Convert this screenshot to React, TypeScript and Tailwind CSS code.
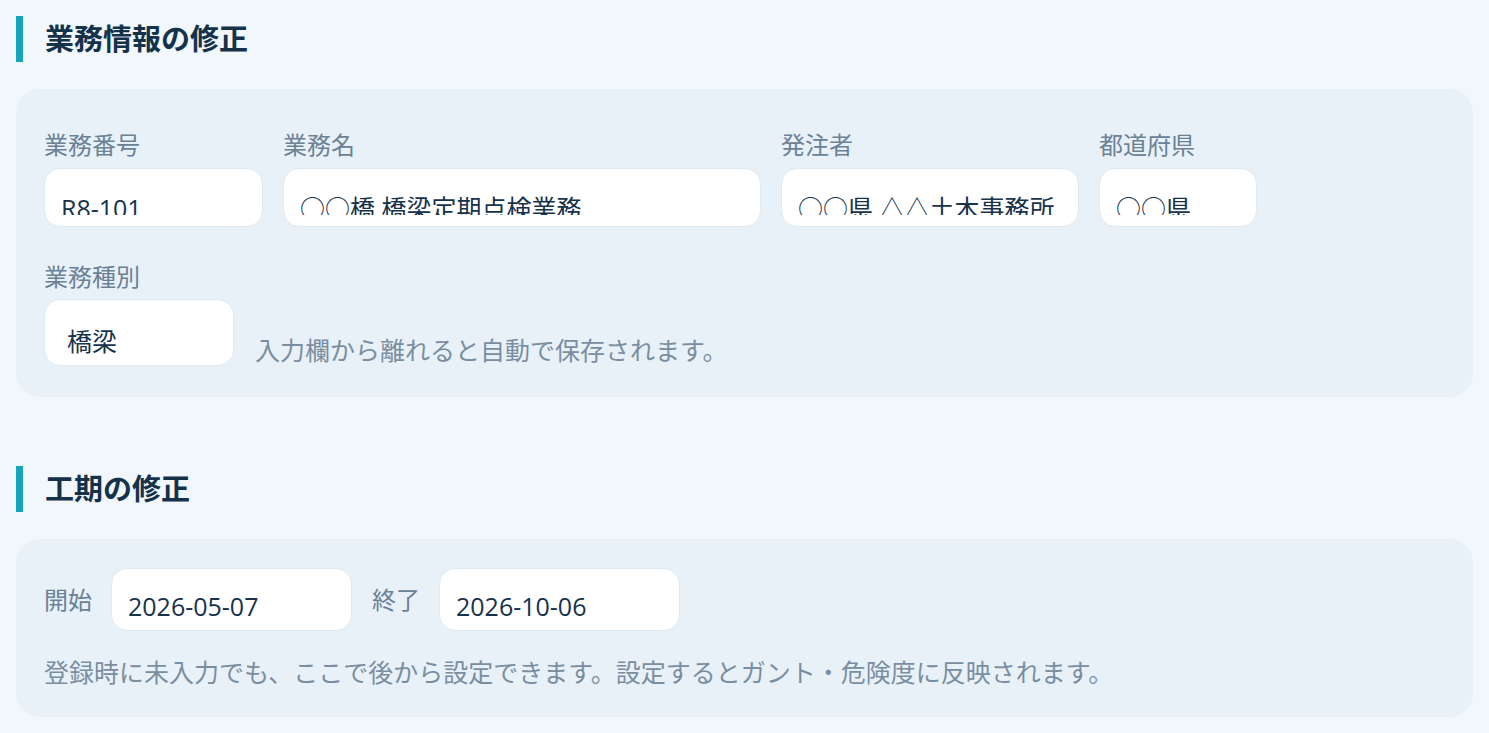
import type { ReactNode } from 'react'

const font = "font-['Open_Sans','Noto_Sans_CJK_JP',sans-serif]"

function SectionTitle({ children }: { children: ReactNode }) {
  return (
    <h2 className="flex h-[46px] items-center border-l-[7px] border-[#17a5ba] pl-[22px] text-[29px] font-bold leading-[46px] text-[#15324b]">
      {children}
    </h2>
  )
}

// The row's inputs are a bit short for their text, so the value is cut just above the baseline.
function Field({ label, value, width }: { label: string; value: string; width: string }) {
  return (
    <div className="flex flex-col">
      <label className="mb-[7px] text-[24px] leading-[32px] text-[#6b8196]">{label}</label>
      <div className={`${width} h-[59px] rounded-[16px] border border-[#dfe9f1] bg-white pl-[16px] pr-[12px] pt-[22px]`}>
        <div className="h-[24px] overflow-hidden">
          <input
            readOnly
            value={value}
            className="block h-[34px] w-full bg-transparent text-[25px] leading-[34px] text-[#17324b] outline-none"
          />
        </div>
      </div>
    </div>
  )
}

export default function App() {
  return (
    <div className={`min-h-screen bg-[#f1f7fb] px-4 pt-4 pb-6 ${font}`}>
      <SectionTitle>業務情報の修正</SectionTitle>

      <section className="mt-[27px] rounded-[24px] bg-[#e8f1f8] px-[28px] pt-[40px] pb-[31px]">
        <div className="flex gap-[20px]">
          <Field label="業務番号" value="R8-101" width="w-[219px]" />
          <Field label="業務名" value="○○橋 橋梁定期点検業務" width="w-[478px]" />
          <Field label="発注者" value="○○県 △△土木事務所" width="w-[298px]" />
          <Field label="都道府県" value="○○県" width="w-[158px]" />
        </div>

        <div className="mt-[34px] flex items-end gap-[21px]">
          <div className="flex flex-col">
            <label className="mb-[6px] text-[24px] leading-[32px] text-[#6b8196]">業務種別</label>
            <input
              readOnly
              value="橋梁"
              className="h-[67px] w-[190px] rounded-[16px] border border-[#dfe9f1] bg-white pl-[22px] pr-[12px] pt-[20px] pb-[6px] text-[25px] leading-[34px] text-[#17324b] outline-none"
            />
          </div>
          <p className="text-[25px] leading-[32px] text-[#7a8ea1]">入力欄から離れると自動で保存されます。</p>
        </div>
      </section>

      <div className="mt-[69px]">
        <SectionTitle>工期の修正</SectionTitle>
      </div>

      <section className="mt-[27px] rounded-[24px] bg-[#e8f1f8] px-[28px] pt-[29px] pb-[29px]">
        <div className="flex items-center">
          <span className="mr-[19px] text-[24px] leading-[32px] text-[#6b8196]">開始</span>
          <input
            readOnly
            value="2026-05-07"
            className="h-[63px] w-[241px] rounded-[16px] border border-[#dfe9f1] bg-white pl-[16px] pr-[12px] pt-[20px] pb-[8px] text-[25px] leading-[34px] text-[#17324b] outline-none"
          />
          <span className="ml-[20px] mr-[19px] text-[24px] leading-[32px] text-[#6b8196]">終了</span>
          <input
            readOnly
            value="2026-10-06"
            className="h-[63px] w-[241px] rounded-[16px] border border-[#dfe9f1] bg-white pl-[16px] pr-[12px] pt-[20px] pb-[8px] text-[25px] leading-[34px] text-[#17324b] outline-none"
          />
        </div>
        <p className="mt-[25px] text-[25px] leading-[32px] text-[#7a8ea1]">
          登録時に未入力でも、ここで後から設定できます。設定するとガント・危険度に反映されます。
        </p>
      </section>
    </div>
  )
}
